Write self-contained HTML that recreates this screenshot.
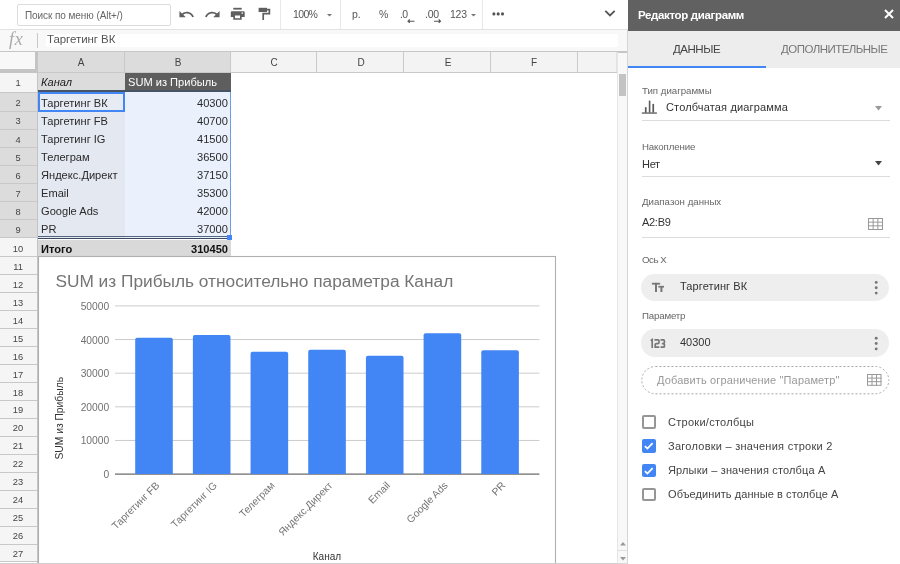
<!DOCTYPE html>
<html><head><meta charset="utf-8">
<style>
*{margin:0;padding:0;box-sizing:border-box}
html,body{width:900px;height:564px;overflow:hidden;background:#fff;font-family:"Liberation Sans",sans-serif;position:relative}
.a{position:absolute}
.t{position:absolute;white-space:nowrap;line-height:1;will-change:transform}
svg{position:absolute;overflow:visible;will-change:transform}
</style></head><body>
<div class="a" style="left:0px;top:0px;width:628px;height:30px;background:#fff"></div>
<div class="a" style="left:0px;top:29px;width:628px;height:1px;background:#e2e2e2"></div>
<div class="a" style="left:17px;top:4px;width:154px;height:22px;border:1px solid #dcdcdc;border-radius:2px;background:#fff"></div>
<div class="t" style="left:24.9px;top:10.73px;font-size:10px;letter-spacing:-0.077px;color:#666">Поиск по меню (Alt+/)</div>
<svg style="left:177.6px;top:5.7px" width="17" height="17" viewBox="0 0 24 24"><path fill="#5f5f5f" d="M12.5 8c-2.65 0-5.05.99-6.9 2.6L2 7v9h9l-3.62-3.62c1.39-1.16 3.16-1.88 5.12-1.88 3.54 0 6.55 2.31 7.6 5.5l2.37-.78C21.08 11.03 17.15 8 12.5 8z"/></svg>
<svg style="left:203.9px;top:5.7px" width="17" height="17" viewBox="0 0 24 24"><path fill="#5f5f5f" d="M18.4 10.6C16.55 8.99 14.15 8 11.5 8c-4.65 0-8.58 3.03-9.96 7.22L3.9 16c1.05-3.19 4.05-5.5 7.6-5.5 1.95 0 3.73.72 5.12 1.88L13 16h9V7l-3.6 3.6z"/></svg>
<svg style="left:0;top:0" width="300" height="30" viewBox="0 0 300 30">
<rect x="233.3" y="7.8" width="8.4" height="1.8" fill="#5f5f5f"/>
<path fill="#5f5f5f" fill-rule="evenodd" d="M231.8 11.2H243.7Q244.7 11.2 244.7 12.2V17H241.7V19.8H233.3V17H230.8V12.2Q230.8 11.2 231.8 11.2ZM235 15.6V18.2H240V15.6Z"/>
<rect x="241.6" y="12.4" width="1.4" height="1.3" fill="#fff"/>
<rect x="258.6" y="7.8" width="8.4" height="4.2" fill="#5f5f5f"/>
<path fill="none" stroke="#5f5f5f" stroke-width="1.7" d="M267 9.6H269.4V13.7H263.2V20"/>
</svg>
<div class="a" style="left:280px;top:0px;width:1px;height:29px;background:#e8e8e8"></div>
<div class="t" style="left:293px;top:9.31px;font-size:10.5px;letter-spacing:-0.638px;color:#555">100%</div>
<svg style="left:327px;top:13.5px" width="5" height="3" viewBox="0 0 5 3"><path fill="#777" d="M0 0h5L2.5 2.5z"/></svg>
<div class="a" style="left:340px;top:0px;width:1px;height:29px;background:#e8e8e8"></div>
<div class="t" style="left:352px;top:9.31px;font-size:10.5px;letter-spacing:-0.028px;color:#555">р.</div>
<div class="t" style="left:378.7px;top:9.31px;font-size:10.5px;letter-spacing:-2.037px;color:#555">%</div>
<div class="t" style="left:400.4px;top:9.11px;font-size:10.5px;letter-spacing:-0.578px;color:#555">.0</div>
<svg style="left:407px;top:18.5px" width="8" height="5" viewBox="0 0 8 5"><path fill="none" stroke="#555" stroke-width="1.1" d="M1 2.2h6.5M2.8 0.5L1 2.2l1.8 1.7"/></svg>
<div class="t" style="left:425.3px;top:9.11px;font-size:10.5px;letter-spacing:-0.198px;color:#555">.00</div>
<svg style="left:433.5px;top:18.5px" width="8" height="5" viewBox="0 0 8 5"><path fill="none" stroke="#555" stroke-width="1.1" d="M0 2.2h6.5M4.7 0.5l1.8 1.7-1.8 1.7"/></svg>
<div class="t" style="left:450px;top:9.31px;font-size:10.5px;letter-spacing:-0.272px;color:#555">123</div>
<svg style="left:471px;top:13.5px" width="5" height="3" viewBox="0 0 5 3"><path fill="#777" d="M0 0h5L2.5 2.5z"/></svg>
<div class="a" style="left:482px;top:0px;width:1px;height:29px;background:#e8e8e8"></div>
<svg style="left:0;top:0" width="900" height="30" viewBox="0 0 900 30"><g fill="#555"><circle cx="493.9" cy="13.9" r="1.55"/><circle cx="498.2" cy="13.9" r="1.55"/><circle cx="502.5" cy="13.9" r="1.55"/></g></svg>
<svg style="left:604px;top:9px" width="12" height="9" viewBox="0 0 12 9"><path fill="none" stroke="#555" stroke-width="1.8" d="M1.3 1.8l4.7 4.7 4.7-4.7"/></svg>
<div class="a" style="left:0px;top:30px;width:628px;height:21px;background:#f8f8f8"></div>
<div class="a" style="left:46px;top:34px;width:572px;height:12.5px;background:#fff"></div>
<div class="t" style="left:9px;top:30.26px;font-size:18px;letter-spacing:0.650px;font-family:'Liberation Serif',serif;font-style:italic;color:#aaaaaa">fx</div>
<div class="a" style="left:37px;top:33px;width:1px;height:15px;background:#c8c8c8"></div>
<div class="t" style="left:46.5px;top:34.27px;font-size:11.5px;letter-spacing:-0.063px;color:#555">Таргетинг ВК</div>
<div class="a" style="left:0px;top:50.5px;width:628px;height:2px;background:#c6c6c6"></div>
<div class="a" style="left:0px;top:52px;width:38px;height:21px;background:#c4c4c4"></div>
<div class="a" style="left:0px;top:52px;width:35px;height:17px;background:#f8f8f8"></div>
<div class="a" style="left:38px;top:52px;width:86.5px;height:20px;background:#dcdcdc"></div>
<div class="a" style="left:123.5px;top:52px;width:1px;height:20px;background:#c9c9c9"></div>
<div class="t" style="left:31.25px;width:100px;text-align:center;top:57.63px;font-size:10px;color:#444">A</div>
<div class="a" style="left:124.5px;top:52px;width:106.0px;height:20px;background:#dcdcdc"></div>
<div class="a" style="left:229.5px;top:52px;width:1px;height:20px;background:#c9c9c9"></div>
<div class="t" style="left:127.5px;width:100px;text-align:center;top:57.63px;font-size:10px;color:#444">B</div>
<div class="a" style="left:230.5px;top:52px;width:86.80000000000001px;height:20px;background:#f3f3f3"></div>
<div class="a" style="left:316.3px;top:52px;width:1px;height:20px;background:#c9c9c9"></div>
<div class="t" style="left:223.89999999999998px;width:100px;text-align:center;top:57.63px;font-size:10px;color:#444">C</div>
<div class="a" style="left:317.3px;top:52px;width:87.0px;height:20px;background:#f3f3f3"></div>
<div class="a" style="left:403.3px;top:52px;width:1px;height:20px;background:#c9c9c9"></div>
<div class="t" style="left:310.8px;width:100px;text-align:center;top:57.63px;font-size:10px;color:#444">D</div>
<div class="a" style="left:404.3px;top:52px;width:86.69999999999999px;height:20px;background:#f3f3f3"></div>
<div class="a" style="left:490px;top:52px;width:1px;height:20px;background:#c9c9c9"></div>
<div class="t" style="left:397.65px;width:100px;text-align:center;top:57.63px;font-size:10px;color:#444">E</div>
<div class="a" style="left:491px;top:52px;width:86.5px;height:20px;background:#f3f3f3"></div>
<div class="a" style="left:576.5px;top:52px;width:1px;height:20px;background:#c9c9c9"></div>
<div class="t" style="left:484.25px;width:100px;text-align:center;top:57.63px;font-size:10px;color:#444">F</div>
<div class="a" style="left:577.5px;top:52px;width:39.5px;height:20px;background:#f3f3f3"></div>
<div class="a" style="left:616px;top:52px;width:1px;height:20px;background:#e2e2e2"></div>
<div class="a" style="left:38px;top:72px;width:579px;height:1px;background:#c9c9c9"></div>
<div class="a" style="left:0px;top:72.5px;width:37px;height:20.0px;background:#f5f5f5"></div>
<div class="a" style="left:0px;top:92.5px;width:37px;height:18.900000000000006px;background:#dcdcdc"></div>
<div class="a" style="left:0px;top:111.4px;width:37px;height:18.0px;background:#dcdcdc"></div>
<div class="a" style="left:0px;top:129.4px;width:37px;height:18.19999999999999px;background:#dcdcdc"></div>
<div class="a" style="left:0px;top:147.6px;width:37px;height:18.200000000000017px;background:#dcdcdc"></div>
<div class="a" style="left:0px;top:165.8px;width:37px;height:17.799999999999983px;background:#dcdcdc"></div>
<div class="a" style="left:0px;top:183.6px;width:37px;height:17.900000000000006px;background:#dcdcdc"></div>
<div class="a" style="left:0px;top:201.5px;width:37px;height:18.099999999999994px;background:#dcdcdc"></div>
<div class="a" style="left:0px;top:219.6px;width:37px;height:18.099999999999994px;background:#dcdcdc"></div>
<div class="a" style="left:0px;top:237.7px;width:37px;height:19.100000000000023px;background:#f5f5f5"></div>
<div class="a" style="left:0px;top:256.8px;width:37px;height:18.099999999999966px;background:#f5f5f5"></div>
<div class="a" style="left:0px;top:274.9px;width:37px;height:17.939999999999998px;background:#f5f5f5"></div>
<div class="a" style="left:0px;top:292.84px;width:37px;height:17.939999999999998px;background:#f5f5f5"></div>
<div class="a" style="left:0px;top:310.78px;width:37px;height:17.939999999999998px;background:#f5f5f5"></div>
<div class="a" style="left:0px;top:328.71999999999997px;width:37px;height:17.939999999999998px;background:#f5f5f5"></div>
<div class="a" style="left:0px;top:346.65999999999997px;width:37px;height:17.939999999999998px;background:#f5f5f5"></div>
<div class="a" style="left:0px;top:364.59999999999997px;width:37px;height:17.939999999999998px;background:#f5f5f5"></div>
<div class="a" style="left:0px;top:382.53999999999996px;width:37px;height:17.940000000000055px;background:#f5f5f5"></div>
<div class="a" style="left:0px;top:400.48px;width:37px;height:17.93999999999994px;background:#f5f5f5"></div>
<div class="a" style="left:0px;top:418.41999999999996px;width:37px;height:17.940000000000055px;background:#f5f5f5"></div>
<div class="a" style="left:0px;top:436.36px;width:37px;height:17.93999999999994px;background:#f5f5f5"></div>
<div class="a" style="left:0px;top:454.29999999999995px;width:37px;height:17.940000000000055px;background:#f5f5f5"></div>
<div class="a" style="left:0px;top:472.24px;width:37px;height:17.939999999999998px;background:#f5f5f5"></div>
<div class="a" style="left:0px;top:490.18px;width:37px;height:17.939999999999998px;background:#f5f5f5"></div>
<div class="a" style="left:0px;top:508.12px;width:37px;height:17.93999999999994px;background:#f5f5f5"></div>
<div class="a" style="left:0px;top:526.06px;width:37px;height:17.940000000000055px;background:#f5f5f5"></div>
<div class="a" style="left:0px;top:544.0px;width:37px;height:17.940000000000055px;background:#f5f5f5"></div>
<div class="a" style="left:0px;top:92.0px;width:37px;height:1px;background:#c8c8c8"></div>
<div class="t" style="left:-32.4px;width:100px;text-align:center;top:78.73px;font-size:9.3px;color:#444">1</div>
<div class="a" style="left:0px;top:110.9px;width:37px;height:1px;background:#c8c8c8"></div>
<div class="t" style="left:-32.4px;width:100px;text-align:center;top:99.43px;font-size:9.3px;color:#444">2</div>
<div class="a" style="left:0px;top:128.9px;width:37px;height:1px;background:#c8c8c8"></div>
<div class="t" style="left:-32.4px;width:100px;text-align:center;top:117.43px;font-size:9.3px;color:#444">3</div>
<div class="a" style="left:0px;top:147.1px;width:37px;height:1px;background:#c8c8c8"></div>
<div class="t" style="left:-32.4px;width:100px;text-align:center;top:135.63px;font-size:9.3px;color:#444">4</div>
<div class="a" style="left:0px;top:165.3px;width:37px;height:1px;background:#c8c8c8"></div>
<div class="t" style="left:-32.4px;width:100px;text-align:center;top:153.83px;font-size:9.3px;color:#444">5</div>
<div class="a" style="left:0px;top:183.1px;width:37px;height:1px;background:#c8c8c8"></div>
<div class="t" style="left:-32.4px;width:100px;text-align:center;top:171.63px;font-size:9.3px;color:#444">6</div>
<div class="a" style="left:0px;top:201.0px;width:37px;height:1px;background:#c8c8c8"></div>
<div class="t" style="left:-32.4px;width:100px;text-align:center;top:189.53px;font-size:9.3px;color:#444">7</div>
<div class="a" style="left:0px;top:219.1px;width:37px;height:1px;background:#c8c8c8"></div>
<div class="t" style="left:-32.4px;width:100px;text-align:center;top:207.63px;font-size:9.3px;color:#444">8</div>
<div class="a" style="left:0px;top:237.2px;width:37px;height:1px;background:#c8c8c8"></div>
<div class="t" style="left:-32.4px;width:100px;text-align:center;top:225.73px;font-size:9.3px;color:#444">9</div>
<div class="a" style="left:0px;top:256.3px;width:37px;height:1px;background:#c8c8c8"></div>
<div class="t" style="left:-32.4px;width:100px;text-align:center;top:244.83px;font-size:9.3px;color:#444">10</div>
<div class="a" style="left:0px;top:274.4px;width:37px;height:1px;background:#c8c8c8"></div>
<div class="t" style="left:-32.4px;width:100px;text-align:center;top:262.93px;font-size:9.3px;color:#444">11</div>
<div class="a" style="left:0px;top:292.34px;width:37px;height:1px;background:#c8c8c8"></div>
<div class="t" style="left:-32.4px;width:100px;text-align:center;top:280.87px;font-size:9.3px;color:#444">12</div>
<div class="a" style="left:0px;top:310.28px;width:37px;height:1px;background:#c8c8c8"></div>
<div class="t" style="left:-32.4px;width:100px;text-align:center;top:298.81px;font-size:9.3px;color:#444">13</div>
<div class="a" style="left:0px;top:328.21999999999997px;width:37px;height:1px;background:#c8c8c8"></div>
<div class="t" style="left:-32.4px;width:100px;text-align:center;top:316.75px;font-size:9.3px;color:#444">14</div>
<div class="a" style="left:0px;top:346.15999999999997px;width:37px;height:1px;background:#c8c8c8"></div>
<div class="t" style="left:-32.4px;width:100px;text-align:center;top:334.69px;font-size:9.3px;color:#444">15</div>
<div class="a" style="left:0px;top:364.09999999999997px;width:37px;height:1px;background:#c8c8c8"></div>
<div class="t" style="left:-32.4px;width:100px;text-align:center;top:352.63px;font-size:9.3px;color:#444">16</div>
<div class="a" style="left:0px;top:382.03999999999996px;width:37px;height:1px;background:#c8c8c8"></div>
<div class="t" style="left:-32.4px;width:100px;text-align:center;top:370.57px;font-size:9.3px;color:#444">17</div>
<div class="a" style="left:0px;top:399.98px;width:37px;height:1px;background:#c8c8c8"></div>
<div class="t" style="left:-32.4px;width:100px;text-align:center;top:388.51px;font-size:9.3px;color:#444">18</div>
<div class="a" style="left:0px;top:417.91999999999996px;width:37px;height:1px;background:#c8c8c8"></div>
<div class="t" style="left:-32.4px;width:100px;text-align:center;top:406.45px;font-size:9.3px;color:#444">19</div>
<div class="a" style="left:0px;top:435.86px;width:37px;height:1px;background:#c8c8c8"></div>
<div class="t" style="left:-32.4px;width:100px;text-align:center;top:424.39px;font-size:9.3px;color:#444">20</div>
<div class="a" style="left:0px;top:453.79999999999995px;width:37px;height:1px;background:#c8c8c8"></div>
<div class="t" style="left:-32.4px;width:100px;text-align:center;top:442.33px;font-size:9.3px;color:#444">21</div>
<div class="a" style="left:0px;top:471.74px;width:37px;height:1px;background:#c8c8c8"></div>
<div class="t" style="left:-32.4px;width:100px;text-align:center;top:460.27px;font-size:9.3px;color:#444">22</div>
<div class="a" style="left:0px;top:489.68px;width:37px;height:1px;background:#c8c8c8"></div>
<div class="t" style="left:-32.4px;width:100px;text-align:center;top:478.21px;font-size:9.3px;color:#444">23</div>
<div class="a" style="left:0px;top:507.62px;width:37px;height:1px;background:#c8c8c8"></div>
<div class="t" style="left:-32.4px;width:100px;text-align:center;top:496.15px;font-size:9.3px;color:#444">24</div>
<div class="a" style="left:0px;top:525.56px;width:37px;height:1px;background:#c8c8c8"></div>
<div class="t" style="left:-32.4px;width:100px;text-align:center;top:514.09px;font-size:9.3px;color:#444">25</div>
<div class="a" style="left:0px;top:543.5px;width:37px;height:1px;background:#c8c8c8"></div>
<div class="t" style="left:-32.4px;width:100px;text-align:center;top:532.03px;font-size:9.3px;color:#444">26</div>
<div class="a" style="left:0px;top:561.44px;width:37px;height:1px;background:#c8c8c8"></div>
<div class="t" style="left:-32.4px;width:100px;text-align:center;top:549.97px;font-size:9.3px;color:#444">27</div>
<div class="a" style="left:37px;top:72px;width:1px;height:491px;background:#c4c4c4"></div>
<div class="a" style="left:38px;top:73px;width:86.5px;height:17px;background:#dcdcdc"></div>
<div class="a" style="left:124.5px;top:73px;width:106px;height:18.5px;background:#5e5e5e"></div>
<div class="t" style="left:41px;top:76.80px;font-size:11.1px;font-style:italic;color:#222">Канал</div>
<div class="t" style="left:127.7px;top:76.90px;font-size:11.1px;color:#fff">SUM из Прибыль</div>
<div class="a" style="left:38px;top:90px;width:192.5px;height:2px;background:#465466"></div>
<div class="a" style="left:38px;top:92px;width:86.5px;height:146px;background:#e4e8f1"></div>
<div class="a" style="left:124.5px;top:92px;width:106px;height:146px;background:#eaf1fd"></div>
<div class="a" style="left:230px;top:92px;width:1px;height:146px;background:#6f9be8"></div>
<div class="a" style="left:40px;top:93.5px;width:83px;height:16.5px;background:#e7ebf4"></div>
<div class="t" style="left:41px;top:97.80px;font-size:11.1px;color:#2a2a2a">Таргетинг ВК</div>
<div class="t" style="right:672.2px;top:97.80px;font-size:11.1px;color:#2a2a2a">40300</div>
<div class="t" style="left:41px;top:115.80px;font-size:11.1px;color:#2a2a2a">Таргетинг FB</div>
<div class="t" style="right:672.2px;top:115.80px;font-size:11.1px;color:#2a2a2a">40700</div>
<div class="t" style="left:41px;top:133.80px;font-size:11.1px;color:#2a2a2a">Таргетинг IG</div>
<div class="t" style="right:672.2px;top:133.80px;font-size:11.1px;color:#2a2a2a">41500</div>
<div class="t" style="left:41px;top:151.80px;font-size:11.1px;color:#2a2a2a">Телеграм</div>
<div class="t" style="right:672.2px;top:151.80px;font-size:11.1px;color:#2a2a2a">36500</div>
<div class="t" style="left:41px;top:169.80px;font-size:11.1px;color:#2a2a2a">Яндекс.Директ</div>
<div class="t" style="right:672.2px;top:169.80px;font-size:11.1px;color:#2a2a2a">37150</div>
<div class="t" style="left:41px;top:187.80px;font-size:11.1px;color:#2a2a2a">Email</div>
<div class="t" style="right:672.2px;top:187.80px;font-size:11.1px;color:#2a2a2a">35300</div>
<div class="t" style="left:41px;top:205.80px;font-size:11.1px;color:#2a2a2a">Google Ads</div>
<div class="t" style="right:672.2px;top:205.80px;font-size:11.1px;color:#2a2a2a">42000</div>
<div class="t" style="left:41px;top:223.80px;font-size:11.1px;color:#2a2a2a">PR</div>
<div class="t" style="right:672.2px;top:223.80px;font-size:11.1px;color:#2a2a2a">37000</div>
<div class="a" style="left:38px;top:91.5px;width:87px;height:20.5px;border:2px solid #4285f4"></div>
<div class="a" style="left:38px;top:235.8px;width:192px;height:1.3px;background:#55657b"></div>
<div class="a" style="left:38px;top:237.8px;width:192px;height:1.6px;background:#3b4a60"></div>
<div class="a" style="left:227.2px;top:235.2px;width:5px;height:4.8px;background:#4285f4"></div>
<div class="a" style="left:38px;top:239.5px;width:192.8px;height:16.5px;background:#d9d9d9"></div>
<div class="t" style="left:41px;top:243.90px;font-size:11.1px;font-weight:bold;color:#111">Итого</div>
<div class="t" style="right:672px;top:243.90px;font-size:11.1px;font-weight:bold;color:#111">310450</div>
<div class="a" style="left:38px;top:256px;width:192.8px;height:1px;background:#c4c4c4"></div>
<div class="a" style="left:617px;top:52.5px;width:11px;height:512px;background:#f8f8f8"></div>
<div class="a" style="left:617px;top:52px;width:1px;height:512px;background:#e6e6e6"></div>
<div class="a" style="left:619px;top:74px;width:7px;height:22px;background:#c3c3c3"></div>
<svg style="left:619.5px;top:542px" width="6" height="3.5" viewBox="0 0 6 3.5"><path fill="#999" d="M0 3.5h6L3 0z"/></svg>
<svg style="left:619.5px;top:556.5px" width="6" height="3.5" viewBox="0 0 6 3.5"><path fill="#999" d="M0 0h6L3 3.5z"/></svg>
<div class="a" style="left:617px;top:550px;width:11px;height:1px;background:#dde0e6"></div>
<svg style="left:0;top:0" width="900" height="564" viewBox="0 0 900 564">
<rect x="38.5" y="256.5" width="517" height="320" fill="#fff" stroke="#b0b0b0" stroke-width="1.1"/>
<text x="55.4" y="286.8" font-family="Liberation Sans" font-size="17.3" fill="#757575">SUM из Прибыль относительно параметра Канал</text>
<rect x="115" y="305.40" width="424.4" height="1" fill="#cccccc"/>
<rect x="115" y="339.04" width="424.4" height="1" fill="#cccccc"/>
<rect x="115" y="372.68" width="424.4" height="1" fill="#cccccc"/>
<rect x="115" y="406.32" width="424.4" height="1" fill="#cccccc"/>
<rect x="115" y="439.96" width="424.4" height="1" fill="#cccccc"/>
<text x="109.2" y="309.90" text-anchor="end" font-family="Liberation Sans" font-size="10.25" fill="#707070">50000</text>
<text x="109.2" y="343.54" text-anchor="end" font-family="Liberation Sans" font-size="10.25" fill="#707070">40000</text>
<text x="109.2" y="377.18" text-anchor="end" font-family="Liberation Sans" font-size="10.25" fill="#707070">30000</text>
<text x="109.2" y="410.82" text-anchor="end" font-family="Liberation Sans" font-size="10.25" fill="#707070">20000</text>
<text x="109.2" y="444.46" text-anchor="end" font-family="Liberation Sans" font-size="10.25" fill="#707070">10000</text>
<text x="109.2" y="478.10" text-anchor="end" font-family="Liberation Sans" font-size="10.25" fill="#707070">0</text>
<rect x="115" y="473.50" width="424.4" height="1.2" fill="#666"/>
<path d="M135.20 474.10V339.69Q135.20 337.69 137.20 337.69H170.80Q172.80 337.69 172.80 339.69V474.10Z" fill="#4285f4"/>
<text transform="translate(160.00 486.10) rotate(-45)" text-anchor="end" font-family="Liberation Sans" font-size="10.3" fill="#757575">Таргетинг FB</text>
<path d="M192.88 474.10V336.99Q192.88 334.99 194.88 334.99H228.48Q230.48 334.99 230.48 336.99V474.10Z" fill="#4285f4"/>
<text transform="translate(217.68 486.10) rotate(-45)" text-anchor="end" font-family="Liberation Sans" font-size="10.3" fill="#757575">Таргетинг IG</text>
<path d="M250.56 474.10V353.81Q250.56 351.81 252.56 351.81H286.16Q288.16 351.81 288.16 353.81V474.10Z" fill="#4285f4"/>
<text transform="translate(275.36 486.10) rotate(-45)" text-anchor="end" font-family="Liberation Sans" font-size="10.3" fill="#757575">Телеграм</text>
<path d="M308.24 474.10V351.63Q308.24 349.63 310.24 349.63H343.84Q345.84 349.63 345.84 351.63V474.10Z" fill="#4285f4"/>
<text transform="translate(333.04 486.10) rotate(-45)" text-anchor="end" font-family="Liberation Sans" font-size="10.3" fill="#757575">Яндекс.Директ</text>
<path d="M365.92 474.10V357.85Q365.92 355.85 367.92 355.85H401.52Q403.52 355.85 403.52 357.85V474.10Z" fill="#4285f4"/>
<text transform="translate(390.72 486.10) rotate(-45)" text-anchor="end" font-family="Liberation Sans" font-size="10.3" fill="#757575">Email</text>
<path d="M423.60 474.10V335.31Q423.60 333.31 425.60 333.31H459.20Q461.20 333.31 461.20 335.31V474.10Z" fill="#4285f4"/>
<text transform="translate(448.40 486.10) rotate(-45)" text-anchor="end" font-family="Liberation Sans" font-size="10.3" fill="#757575">Google Ads</text>
<path d="M481.28 474.10V352.13Q481.28 350.13 483.28 350.13H516.88Q518.88 350.13 518.88 352.13V474.10Z" fill="#4285f4"/>
<text transform="translate(506.08 486.10) rotate(-45)" text-anchor="end" font-family="Liberation Sans" font-size="10.3" fill="#757575">PR</text>
<text transform="translate(63.3 418.3) rotate(-90)" text-anchor="middle" font-family="Liberation Sans" font-size="10.3" fill="#333">SUM из Прибыль</text>
<text x="312.8" y="559.5" font-family="Liberation Sans" font-size="10" fill="#333">Канал</text>
</svg>
<div class="a" style="left:0px;top:562.5px;width:617px;height:1.5px;background:#cfcfcf"></div>
<div class="a" style="left:617px;top:562.5px;width:11px;height:1.5px;background:#d8d8d8"></div>
<div class="a" style="left:628px;top:0px;width:272px;height:564px;background:#fff"></div>
<div class="a" style="left:627px;top:30px;width:1px;height:534px;background:#d6d6d6"></div>
<div class="a" style="left:628px;top:0px;width:272px;height:31px;background:#616161"></div>
<div class="t" style="left:638.2px;top:9.57px;font-size:11.5px;letter-spacing:-0.350px;font-weight:bold;color:#fff">Редактор диаграмм</div>
<svg style="left:884px;top:9px" width="10" height="10" viewBox="0 0 10 10"><path stroke="#fff" stroke-width="2" d="M1 1l8 8M9 1l-8 8"/></svg>
<div class="a" style="left:628px;top:31px;width:272px;height:36.5px;background:#ededed"></div>
<div class="a" style="left:628px;top:65.5px;width:138px;height:2px;background:#4285f4"></div>
<div class="t" style="left:672.9px;top:43.57px;font-size:11.5px;letter-spacing:-0.470px;color:#444">ДАННЫЕ</div>
<div class="t" style="left:781px;top:43.57px;font-size:11.5px;letter-spacing:-0.541px;color:#777">ДОПОЛНИТЕЛЬНЫЕ</div>
<div class="t" style="left:642.4px;top:85.89px;font-size:9.7px;letter-spacing:-0.021px;color:#666">Тип диаграммы</div>
<svg style="left:0;top:0" width="900" height="564" viewBox="0 0 900 564"><g fill="#5a5a5a"><rect x="641.8" y="112.4" width="15.1" height="1.3"/><rect x="644.9" y="107.2" width="1.7" height="5.5"/><rect x="648.8" y="100.6" width="1.6" height="12"/><rect x="652.4" y="103.9" width="1.7" height="8.7"/></g></svg>
<div class="t" style="left:666px;top:102.39px;font-size:11px;letter-spacing:0.155px;color:#333">Столбчатая диаграмма</div>
<svg style="left:875px;top:106px" width="7" height="5" viewBox="0 0 7 5"><path fill="#999" d="M0 0h7L3.5 4.5z"/></svg>
<div class="a" style="left:642px;top:120px;width:247.5px;height:1px;background:#dcdcdc"></div>
<div class="t" style="left:642.4px;top:141.69px;font-size:9.7px;letter-spacing:-0.132px;color:#666">Накопление</div>
<div class="t" style="left:642px;top:158.59px;font-size:11px;letter-spacing:-0.311px;color:#333">Нет</div>
<svg style="left:875px;top:161px" width="7" height="5" viewBox="0 0 7 5"><path fill="#444" d="M0 0h7L3.5 4.5z"/></svg>
<div class="a" style="left:642px;top:176px;width:247.5px;height:1px;background:#dcdcdc"></div>
<div class="t" style="left:642.4px;top:197.19px;font-size:9.7px;letter-spacing:0.001px;color:#666">Диапазон данных</div>
<div class="t" style="left:642px;top:216.89px;font-size:11px;letter-spacing:-0.293px;color:#333">A2:B9</div>
<svg style="left:868px;top:218px" width="15" height="12" viewBox="0 0 15 12"><g fill="none" stroke="#999" stroke-width="1"><rect x="0.5" y="0.5" width="14" height="11"/><line x1="5.17" y1="0" x2="5.17" y2="12"/><line x1="9.83" y1="0" x2="9.83" y2="12"/><line x1="0" y1="4.17" x2="15" y2="4.17"/><line x1="0" y1="7.83" x2="15" y2="7.83"/></g></svg>
<div class="a" style="left:642px;top:236.5px;width:247.5px;height:1px;background:#dcdcdc"></div>
<div class="t" style="left:641.8px;top:255.39px;font-size:9.7px;letter-spacing:-0.483px;color:#666">Ось X</div>
<div class="a" style="left:641.3px;top:273.5px;width:248px;height:27.5px;background:#eeeeee;border-radius:14px"></div>
<svg style="left:0;top:0" width="900" height="564" viewBox="0 0 900 564"><g fill="#777"><rect x="651.9" y="282.8" width="8.2" height="1.8"/><rect x="655" y="282.8" width="2" height="9.2"/><rect x="658.3" y="285.9" width="5.7" height="1.7"/><rect x="660.4" y="285.9" width="2" height="6.1"/></g></svg>
<div class="t" style="left:680.4px;top:281.49px;font-size:11px;letter-spacing:0.104px;color:#333">Таргетинг ВК</div>
<svg style="left:0;top:0" width="900" height="564" viewBox="0 0 900 564"><g fill="#777"><circle cx="876.2" cy="282.40" r="1.45"/><circle cx="876.2" cy="287.75" r="1.45"/><circle cx="876.2" cy="293.10" r="1.45"/></g></svg>
<div class="t" style="left:641.9px;top:311.29px;font-size:9.7px;letter-spacing:-0.179px;color:#666">Параметр</div>
<div class="a" style="left:641.3px;top:329.3px;width:248px;height:27.7px;background:#eeeeee;border-radius:14px"></div>
<svg style="left:0;top:0" width="900" height="564" viewBox="0 0 900 564"><g fill="none" stroke="#777" stroke-width="1.7"><path d="M650.6 340.6L652.2 339.6V348"/><path d="M654.4 339.9H657.8Q659 339.9 659 341.1V342.4Q659 343.6 657.8 343.6H656.4Q655.2 343.6 655.2 344.8V347.2H659.3"/><path d="M660.5 339.9H663.4Q664.4 339.9 664.4 340.9V342.6Q664.4 343.6 663.4 343.6H661.8M663.4 343.6Q664.4 343.6 664.4 344.6V346.2Q664.4 347.2 663.4 347.2H660.5"/></g></svg>
<div class="t" style="left:680.2px;top:337.49px;font-size:11px;letter-spacing:-0.017px;color:#333">40300</div>
<svg style="left:0;top:0" width="900" height="564" viewBox="0 0 900 564"><g fill="#777"><circle cx="876.2" cy="338.20" r="1.45"/><circle cx="876.2" cy="343.55" r="1.45"/><circle cx="876.2" cy="348.90" r="1.45"/></g></svg>
<svg style="left:0;top:0" width="900" height="564" viewBox="0 0 900 564"><rect x="641.8" y="366.5" width="247" height="27.3" rx="13.65" fill="none" stroke="#a8a8a8" stroke-width="1" stroke-dasharray="2 2"/></svg>
<div class="t" style="left:656.7px;top:374.69px;font-size:11px;letter-spacing:0.144px;color:#999">Добавить ограничение "Параметр"</div>
<svg style="left:866.5px;top:374px" width="14.5" height="11.8" viewBox="0 0 14.5 11.8"><g fill="none" stroke="#999" stroke-width="1"><rect x="0.5" y="0.5" width="13.5" height="10.8"/><line x1="5.00" y1="0" x2="5.00" y2="11.8"/><line x1="9.50" y1="0" x2="9.50" y2="11.8"/><line x1="0" y1="4.10" x2="14.5" y2="4.10"/><line x1="0" y1="7.70" x2="14.5" y2="7.70"/></g></svg>
<div class="a" style="left:642.2px;top:415.3px;width:13.5px;height:13.5px;border:2px solid #969696;border-radius:2px"></div>
<div class="t" style="left:668px;top:417.49px;font-size:11px;letter-spacing:0.275px;color:#444">Строки/столбцы</div>
<div class="a" style="left:642.2px;top:439.40000000000003px;width:13.5px;height:13.5px;background:#4285f4;border-radius:2px"></div>
<svg style="left:642.2px;top:439.40px" width="13.5" height="13.5" viewBox="0 0 14 14"><path fill="none" stroke="#fff" stroke-width="1.9" d="M3 7.3l2.6 2.6L11 4.3"/></svg>
<div class="t" style="left:668px;top:441.46px;font-size:11px;letter-spacing:0.260px;color:#444">Заголовки – значения строки 2</div>
<div class="a" style="left:642.2px;top:463.5px;width:13.5px;height:13.5px;background:#4285f4;border-radius:2px"></div>
<svg style="left:642.2px;top:463.50px" width="13.5" height="13.5" viewBox="0 0 14 14"><path fill="none" stroke="#fff" stroke-width="1.9" d="M3 7.3l2.6 2.6L11 4.3"/></svg>
<div class="t" style="left:668px;top:465.43px;font-size:11px;letter-spacing:0.164px;color:#444">Ярлыки – значения столбца А</div>
<div class="a" style="left:642.2px;top:487.6px;width:13.5px;height:13.5px;border:2px solid #969696;border-radius:2px"></div>
<div class="t" style="left:668px;top:489.40px;font-size:11px;letter-spacing:0.079px;color:#444">Объединить данные в столбце А</div>
</body></html>
